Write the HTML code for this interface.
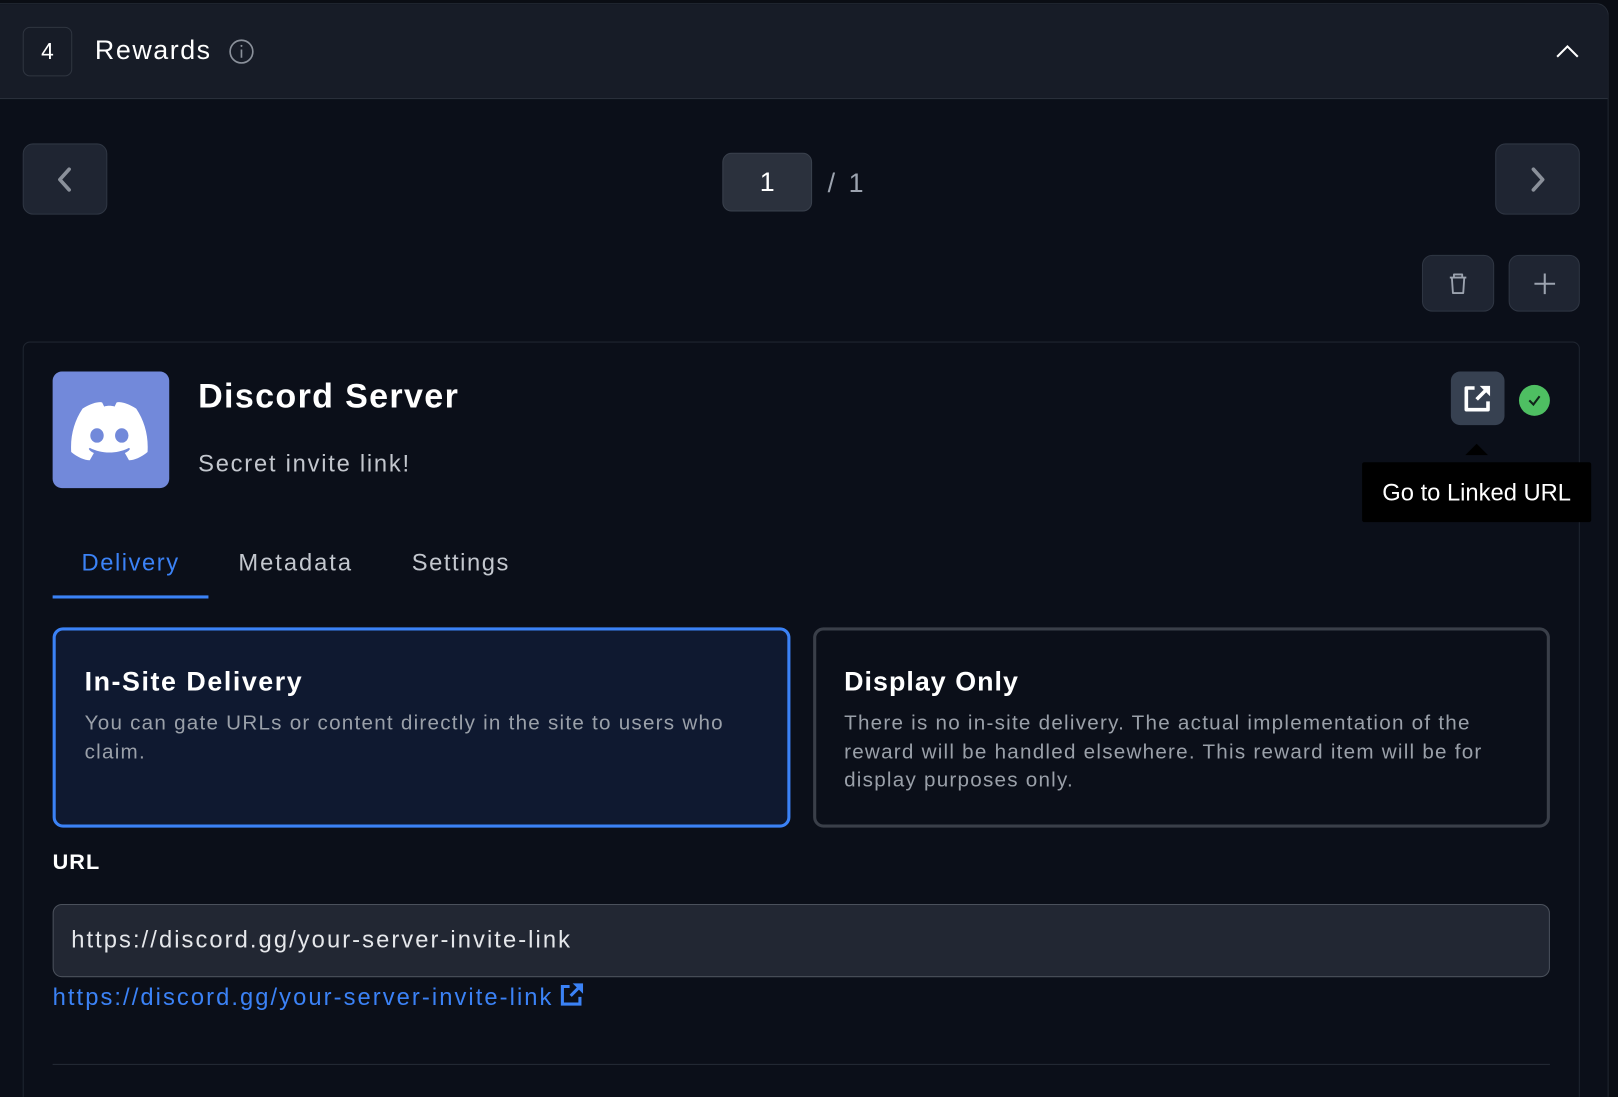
<!DOCTYPE html>
<html><head><meta charset="utf-8"><style>
*{box-sizing:border-box;margin:0;padding:0}
html,body{width:1618px;height:1080px;overflow:hidden;background:#0a0d14;font-family:"Liberation Sans",sans-serif}
#w{position:absolute;left:0;top:0;width:1568px;height:1047px;transform:scale(1.0319);transform-origin:0 0}
.abs{position:absolute}
.panel{left:0;top:3px;width:1559px;height:1060px;background:#0b0f19;border-right:1px solid #272d38;border-top:1px solid #272d38;border-top-right-radius:12px;overflow:hidden}
.hdr{left:0;top:0;width:1559px;height:92px;background:#171c27;border-bottom:1px solid #2a303b}
.btn{background:#1f2532;border:1px solid #2f3643;border-radius:10px;display:flex;align-items:center;justify-content:center}
.t{white-space:nowrap}
.d{white-space:nowrap;color:#9aa0a9;font-size:20px;line-height:27.5px;letter-spacing:1.2px}
</style></head><body><div id="w">
<div class="abs panel">
 <div class="abs hdr">
  <div class="abs" style="left:22px;top:22px;width:48px;height:48px;border:1px solid #2f3540;border-radius:7px;color:#fff;font-size:22px;display:flex;align-items:center;justify-content:center">4</div>
  <div class="abs t" style="left:92px;top:29px;color:#fff;font-size:26px;font-weight:500;letter-spacing:1.5px">Rewards</div>
  <svg class="abs" style="left:221px;top:33px" width="26" height="26"><circle cx="13" cy="13" r="11" fill="none" stroke="#8a909a" stroke-width="1.6"/><line x1="13" y1="11" x2="13" y2="19" stroke="#8a909a" stroke-width="1.6"/><circle cx="13" cy="7.5" r="1" fill="#8a909a"/></svg>
  <svg class="abs" style="left:1507px;top:38px" width="24" height="16"><path d="M2 13 L12 3 L22 13" fill="none" stroke="#fff" stroke-width="2"/></svg>
 </div>
 <div class="abs btn" style="left:22px;top:135px;width:82px;height:69px"><svg width="20" height="28"><path d="M14 4 L5 14 L14 24" fill="none" stroke="#8a909a" stroke-width="3.5" stroke-linecap="round" stroke-linejoin="round"/></svg></div>
 <div class="abs btn" style="left:1449px;top:135px;width:82px;height:69px"><svg width="20" height="28"><path d="M6 4 L15 14 L6 24" fill="none" stroke="#8a909a" stroke-width="3.5" stroke-linecap="round" stroke-linejoin="round"/></svg></div>
 <div class="abs" style="left:700px;top:144px;width:87px;height:57px;background:#2b313d;border:1px solid #3a414d;border-radius:9px;color:#fff;font-size:26px;display:flex;align-items:center;justify-content:center">1</div>
 <div class="abs t" style="left:802px;top:158px;color:#9ca3af;font-size:26px;letter-spacing:3px">/ 1</div>
 <div class="abs btn" style="left:1378px;top:243px;width:70px;height:55px"><svg width="24" height="26"><path d="M4 7 H20 M8 7 V4 H16 V7 M6 7 L7 22 H17 L18 7" fill="none" stroke="#9ca3af" stroke-width="1.8" stroke-linejoin="round"/></svg></div>
 <div class="abs btn" style="left:1462px;top:243px;width:69px;height:55px"><svg width="24" height="24"><path d="M12 2 V22 M2 12 H22" stroke="#9ca3af" stroke-width="2"/></svg></div>
 <div class="abs" style="left:22px;top:327px;width:1509px;height:760px;border:1px solid #1f2530;border-radius:7px"></div>
 <div class="abs" style="left:51px;top:356px;width:113px;height:113px;background:#7289da;border-radius:9px;display:flex;align-items:center;justify-content:center">
  <svg width="86" height="66" viewBox="0 0 86 66" style="margin-left:-3px;margin-top:4px"><path d="M17 10 C26 4 34 3 36 4 L38 8 C41 7 45 7 48 8 L50 4 C52 3 60 4 69 10 C77 22 81 36 80 52 C74 57 67 60 62 60 L58 53 C60 52 62 51 63 49 L62 48 C50 54 36 54 24 48 L23 49 C24 51 26 52 28 53 L24 60 C19 60 12 57 6 52 C5 36 9 22 17 10 Z" fill="#fff"/><ellipse cx="31" cy="36" rx="6.5" ry="7" fill="#7289da"/><ellipse cx="55" cy="36" rx="6.5" ry="7" fill="#7289da"/></svg>
 </div>
 <div class="abs t" style="left:192px;top:361px;color:#fff;font-size:33px;font-weight:bold;letter-spacing:1.3px">Discord Server</div>
 <div class="abs t" style="left:192px;top:432px;color:#c3c7ce;font-size:23px;letter-spacing:1.7px">Secret invite link!</div>
 <div class="abs" style="left:1406px;top:356px;width:52px;height:52px;background:#374151;border-radius:9px;display:flex;align-items:center;justify-content:center">
  <svg width="32" height="32"><path d="M13 6 H5 V27 H26 V19" fill="none" stroke="#fff" stroke-width="3.5" stroke-linejoin="round"/><path d="M15 17 L26 6" stroke="#fff" stroke-width="3.5"/><path d="M18 4 H28 V14 Z" fill="#fff"/></svg>
 </div>
 <div class="abs" style="left:1472px;top:369px;width:30px;height:30px;background:#4ebf62;border-radius:50%;display:flex;align-items:center;justify-content:center"><svg width="16" height="14"><path d="M3 7 L7 11 L13 3" fill="none" stroke="#10251a" stroke-width="2"/></svg></div>
 <div class="abs" style="left:1420px;top:426px;width:0;height:0;border-left:11px solid transparent;border-right:11px solid transparent;border-bottom:11px solid #000"></div>
 <div class="abs t" style="left:1320px;top:444px;width:222px;height:58px;background:#000;border-radius:2px;color:#fff;font-size:23px;display:flex;align-items:center;justify-content:center">Go to Linked URL</div>
 <div class="abs t" style="left:79px;top:528px;color:#3b82f6;font-size:23px;letter-spacing:1.5px">Delivery</div>
 <div class="abs t" style="left:231px;top:528px;color:#c3c7ce;font-size:23px;letter-spacing:1.9px">Metadata</div>
 <div class="abs t" style="left:399px;top:528px;color:#c3c7ce;font-size:23px;letter-spacing:1.5px">Settings</div>
 <div class="abs" style="left:51px;top:573px;width:151px;height:3px;background:#3b82f6"></div>
 <div class="abs" style="left:51px;top:604px;width:715px;height:194px;border:3px solid #3b82f6;border-radius:10px;background:#0f1930"></div>
 <div class="abs t" style="left:82px;top:641px;color:#fff;font-size:26px;font-weight:bold;letter-spacing:1.5px">In-Site Delivery</div>
 <div class="abs d" style="left:82px;top:684px">You can gate URLs or content directly in the site to users who<br>claim.</div>
 <div class="abs" style="left:788px;top:604px;width:714px;height:194px;border:3px solid #3a3f49;border-radius:10px"></div>
 <div class="abs t" style="left:818px;top:641px;color:#fff;font-size:26px;font-weight:bold;letter-spacing:1px">Display Only</div>
 <div class="abs d" style="left:818px;top:684px">There is no in-site delivery. The actual implementation of the<br>reward will be handled elsewhere. This reward item will be for<br>display purposes only.</div>
 <div class="abs t" style="left:51px;top:820px;color:#fff;font-size:21px;font-weight:bold;letter-spacing:1px">URL</div>
 <div class="abs" style="left:51px;top:872px;width:1451px;height:71px;background:#222733;border:1px solid #4b515c;border-radius:9px"></div>
 <div class="abs t" style="left:69px;top:893px;color:#e5e7eb;font-size:23px;letter-spacing:2px">https://discord.gg/your-server-invite-link</div>
 <div class="abs t" style="left:51px;top:948px;color:#3b82f6;font-size:23px;letter-spacing:2px">https://discord.gg/your-server-invite-link<svg width="24" height="24" style="vertical-align:-2px;margin-left:6px"><path d="M10 4 H3 V21 H20 V14" fill="none" stroke="#3b82f6" stroke-width="3"/><path d="M11 13 L20 4" stroke="#3b82f6" stroke-width="3"/><path d="M13 1 H23 V11 Z" fill="#3b82f6"/></svg></div>
 <div class="abs" style="left:51px;top:1027px;width:1451px;height:1px;background:#252b36"></div>
</div>
</div></body></html>
